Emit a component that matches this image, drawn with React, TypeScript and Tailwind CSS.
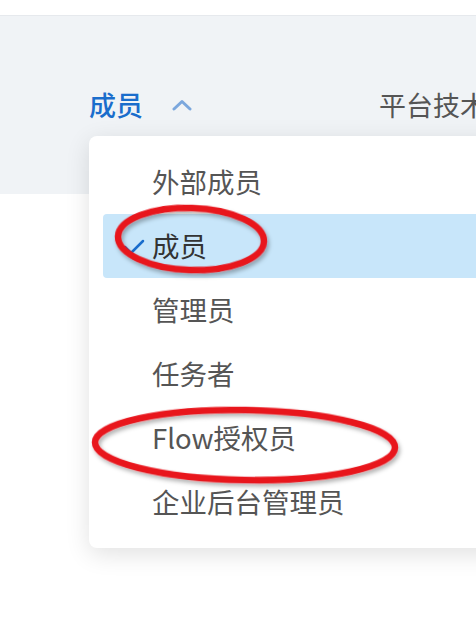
import React from 'react';

const items = ['外部成员', '成员', '管理员', '任务者', 'Flow授权员', '企业后台管理员'];

export default function App() {
  const font = { fontFamily: '"Noto Sans CJK SC", "Noto Sans", sans-serif' };
  return (
    <div className="relative w-[476px] h-[632px] overflow-hidden bg-white" style={font}>
      <div className="h-[16px] bg-white border-b border-[#e6e9ed]" />
      <div className="h-[178px] bg-[#f0f3f6] pt-[70px]">
        <div className="flex items-center pl-[89px] h-[38px] text-[27px] leading-[38px] whitespace-nowrap">
          <span className="text-[#1a6dcc] font-medium">成员</span>
          <svg className="ml-[29px] shrink-0 block" width="20" height="12" viewBox="0 0 20 12" fill="none">
            <path d="M2 10 L10 2.5 L18 10" stroke="#7ba7dd" strokeWidth="3" strokeLinecap="round" strokeLinejoin="round" />
          </svg>
          <span className="ml-[187px] text-[#555]">平台技术</span>
        </div>
      </div>

      {/* dropdown menu */}
      <div className="absolute left-[89px] top-[136px] w-[420px] rounded-[8px] bg-white shadow-[0_6px_24px_rgba(0,0,0,0.12)] pt-[14px] pb-[14px]">
        {items.map((t, i) => {
          const sel = i === 1;
          return (
            <div
              key={t}
              className={
                sel
                  ? 'relative mx-[14px] h-[64px] flex items-center pl-[49px] rounded-[4px] bg-[#c8e6fa] text-[27.5px] text-[#333]'
                  : 'h-[64px] flex items-center pl-[63px] text-[27.5px] text-[#555]'
              }
            >
              {sel && (
                <svg className="absolute left-[20px] top-[25px] block" width="22" height="16" viewBox="0 0 22 16" fill="none">
                  <path d="M2 8 L8 14 L20 2" stroke="#1a6dcc" strokeWidth="2.5" strokeLinecap="round" strokeLinejoin="round" />
                </svg>
              )}
              {t}
            </div>
          );
        })}
      </div>

      {/* red annotation circles */}
      <svg className="absolute inset-0 pointer-events-none" width="476" height="632" viewBox="0 0 476 632">
        <defs>
          <filter id="sh" x="-20%" y="-20%" width="140%" height="140%">
            <feDropShadow dx="2" dy="3" stdDeviation="2" floodColor="#000" floodOpacity="0.3" />
          </filter>
        </defs>
        <ellipse cx="191" cy="239" rx="73" ry="31" fill="none" stroke="#e8141c" strokeWidth="6.5" filter="url(#sh)" transform="rotate(2 191 239)" />
        <ellipse cx="245" cy="445" rx="150" ry="35" fill="none" stroke="#e8141c" strokeWidth="6.5" filter="url(#sh)" transform="rotate(1 245 445)" />
      </svg>
    </div>
  );
}
